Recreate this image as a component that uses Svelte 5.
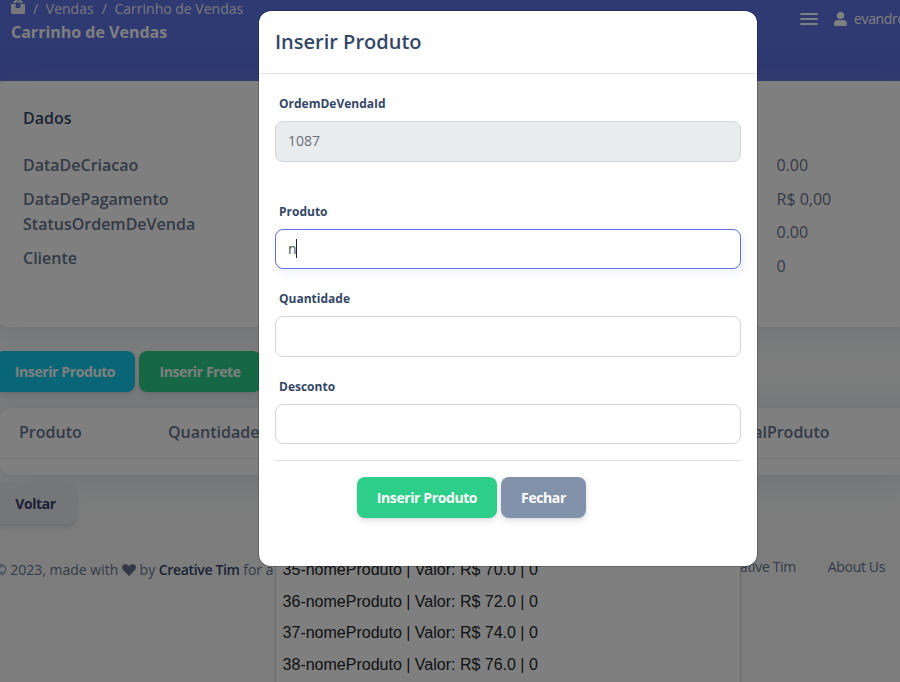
<script>
  const details = ['DataDeCriacao', 'DataDePagamento', 'StatusOrdemDeVenda', 'Cliente'];
  const totals = ['0.00', 'R$ 0,00', '0.00', '0'];
  const options = [
    '35-nomeProduto | Valor: R$ 70.0 | 0',
    '36-nomeProduto | Valor: R$ 72.0 | 0',
    '37-nomeProduto | Valor: R$ 74.0 | 0',
    '38-nomeProduto | Valor: R$ 76.0 | 0'
  ];
</script>

<div class="screen">
  <header>
    <div class="trail">
      <nav>
        <svg class="box" width="14" height="18" viewBox="0 0 14 18"><path d="M0 4.500Q0 4 .8 4H4.700V8H9.300V4H13.200Q14 4 14 4.500V13Q14 14 13 14H1Q0 14 0 13ZM1.500 3L4.300 0H6.400L5 3ZM7.600 0H9.700L12.500 3H9ZM6 1.500L7 0 8 1.500V3H6Z" fill="currentColor" /></svg>
        <span class="sep">/</span><span>Vendas</span><span class="sep two">/</span><span>Carrinho de Vendas</span>
      </nav>
      <h6>Carrinho de Vendas</h6>
    </div>
    <div class="user">
      <div class="burger"><i></i><i></i><i></i></div>
      <svg width="13" height="14" viewBox="0 0 448 512" preserveAspectRatio="none"><path fill="currentColor" d="M224 256a128 128 0 1 0 0-256 128 128 0 0 0 0 256zm89.600 32h-16.700a174 174 0 0 1-145.800 0h-16.700C60.200 288 0 348.200 0 422.400V464c0 26.500 21.500 48 48 48h352c26.500 0 48-21.500 48-48v-41.600c0-74.200-60.200-134.400-134.400-134.400z" /></svg>
      <span>evandro</span>
    </div>
  </header>

  <section class="card data">
    <div class="left">
      <h6>Dados</h6>
      {#each details as d}<p>{d}</p>{/each}
    </div>
    <div class="right">
      {#each totals as t}<p>{t}</p>{/each}
    </div>
  </section>

  <div class="actions">
    <button class="btn info">Inserir Produto</button>
    <button class="btn success">Inserir Frete</button>
  </div>

  <section class="card table">
    <div class="thead"><span class="c1">Produto</span><span class="c2">Quantidade</span><span class="c3">TotalProduto</span></div>
  </section>

  <button class="btn light">Voltar</button>

  <footer>
    <div class="copy">© 2023, made with <svg width="14" height="12" viewBox="0 0 14 12"><path fill="currentColor" d="M7 12L1 6C-.5 4.300-.3 1.900 1.200.8 3-.6 5.200 0 7 2 8.800 0 11-.6 12.800.8c1.500 1.100 1.700 3.500.2 5.200Z" /></svg> by <b>Creative Tim</b> for a</div>
    <div class="links"><span>Creative Tim</span><span>About Us</span></div>
  </footer>

  <div class="list">
    {#each options as o}<div>{o}</div>{/each}
  </div>
  <div class="backdrop"></div>

  <div class="modal">
    <div class="mhead">Inserir Produto</div>
    <div class="mbody">
      <div class="label">OrdemDeVendaId</div>
      <div class="field off">1087</div>
      <div class="label gap">Produto</div>
      <div class="field focus">n<i class="caret"></i></div>
      <div class="label q">Quantidade</div>
      <div class="field"></div>
      <div class="label d">Desconto</div>
      <div class="field short"></div>
      <div class="mfoot">
        <button class="btn go">Inserir Produto</button>
        <button class="btn close">Fechar</button>
      </div>
    </div>
  </div>
</div>

<style>
  :global(body) { margin: 0; overflow: hidden; }
  * { box-sizing: border-box; }
  .screen { position: relative; width: 900px; height: 682px; overflow: hidden; background: #f8f9fa; font-family: 'Open Sans', sans-serif; color: #67748e; white-space: nowrap; }
  h6, p { margin: 0; }
  header { height: 81px; background: #5e72e4; color: #fff; display: flex; justify-content: space-between; }
  .trail { padding-left: 11px; }
  nav { display: flex; height: 18px; line-height: 18px; font-size: 14px; opacity: .9; }
  .sep { margin: 0 7.700px 0 8px; }
  h6 { font-size: 16px; line-height: 26px; font-weight: 700; }
  header h6 { margin-top: 1px; }
  .user { display: flex; align-items: center; height: 38px; width: 100px; font-size: 14px; }
  .user span { letter-spacing: -.35px; position: relative; top: -1px; }
  .user svg { margin: 0 7px 0 16px; flex: none; }
  .burger { width: 18px; flex: none; display: flex; flex-direction: column; gap: 3px; }
  .burger i { height: 2px; background: #fff; border-radius: 1px; }
  .card { background: #fff; box-shadow: 0 0 32px rgba(136, 152, 170, .25); margin: 0 -20px 0 -1px; }
  .data { height: 246px; border-radius: 8px; display: flex; }
  .left { width: 754px; padding: 24px 0 0 24px; }
  .left h6 { color: #344767; font-weight: 600; }
  .left p { font-weight: 600; line-height: 26px; margin-top: 8px; }
  .left h6 + p { margin-top: 21px; }
  .left p:nth-of-type(3) { margin-top: -1px; }
  .right { padding: 71px 0 0 23.500px; }
  .right p { line-height: 26px; margin-bottom: 7.700px; }
  .actions { display: flex; gap: 4px; margin: 24px 0 16px -5px; }
  .btn { border: 0; border-radius: 8px; height: 41px; padding: 0; font: 700 14px 'Open Sans', sans-serif; letter-spacing: -.4px; color: #fff; box-shadow: 0 4px 6px rgba(50, 50, 93, .1), 0 1px 3px rgba(0, 0, 0, .08); }
  .info { width: 140px; background: #11cdef; }
  .success { width: 122px; background: #2dce89; }
  .table { height: 67px; border-radius: 14px; }
  .thead { height: 51px; border-bottom: 1px solid #e9ecef; display: flex; align-items: center; font-weight: 600; padding: 0 0 2px 20px; }
  .c1 { width: 149px; }
  .c2 { width: 560px; }
  .light { display: block; width: 81px; margin: 8px 0 0 -5px; background: #e9ecef; color: #3a416f; }
  footer { display: flex; justify-content: space-between; font-size: 14px; line-height: 20px; margin-top: 36px; padding-right: 15px; }
  .copy { margin-left: -5px; }
  .copy svg { vertical-align: -1px; color: #67748e; }
  .copy b { color: #344767; font-weight: 600; letter-spacing: -.35px; }
  .links { display: flex; gap: 32px; margin-top: -3px; letter-spacing: -.35px; }
  .list { position: absolute; left: 275px; top: 553px; width: 466px; height: 140px; background: #fff; border: 1px solid #ccc; color: #212529; font: 16px/31.600px 'Liberation Sans', sans-serif; padding-left: 6.600px; }
  .backdrop { position: absolute; inset: 0; background: rgba(0, 0, 0, .5); }
  .modal { position: absolute; left: 259px; top: 11px; width: 498px; height: 555px; border-radius: 12px; background: #fff; box-shadow: 0 0 0 1px rgba(0, 0, 0, .2); }
  .mhead { height: 63px; border-bottom: 1px solid #dee2e6; padding-left: 16px; font-size: 20px; line-height: 62px; color: #344767; font-weight: 600; }
  .mbody { padding: 20px 16px 0; }
  .label { height: 27px; line-height: 19px; padding-left: 4px; font-size: 12px; font-weight: 700; color: #344767; }
  .gap { margin-top: 40px; }
  .q { margin-top: 20px; }
  .d { margin-top: 20px; }
  .field { height: 41px; border: 1px solid #d2d6da; border-radius: 8px; padding: 0 0 2px 12px; display: flex; align-items: center; font-size: 14px; color: #495057; }
  .off { background: #e9ecef; color: #686f78; }
  .focus { height: 40px; border-color: #5e72e4; box-shadow: 3px 4px 8px rgba(94, 114, 228, .1); }
  .short { height: 40px; }
  .caret { width: 1px; height: 19px; margin-left: -1px; background: #222; }
  .mfoot { margin-top: 16px; border-top: 1px solid #dee2e6; padding: 16px 0 0 82px; display: flex; gap: 4px; }
  .go { width: 140px; background: #2dce89; }
  .close { width: 85px; background: #8392ab; }
</style>
